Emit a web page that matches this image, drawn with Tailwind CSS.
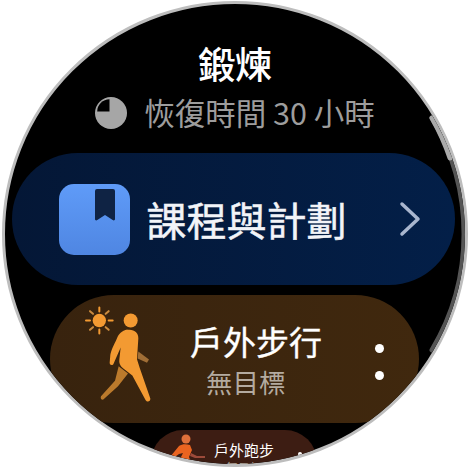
<!DOCTYPE html>
<html lang="zh-Hant">
<head>
    <meta charset="UTF-8">
    <title>鍛煉</title>
    <script src="https://cdn.jsdelivr.net/npm/@tailwindcss/browser@4"></script>
</head>
<body class="bg-white w-[470px] h-[470px] overflow-hidden font-['Noto_Sans_CJK_TC','Noto_Sans',sans-serif]">
    <div class="relative ml-[2px] mt-px w-[466px] h-[466px] rounded-full bg-black border-[3px] border-[#bdbdbd] overflow-hidden">
        <div class="flex flex-col items-center">
            <h1 class="mt-[34px] h-[50px] leading-[50px] text-[37px] font-medium text-white">鍛煉</h1>
            <div class="mt-px flex items-center gap-[17px] h-[46px] text-[#9d9d9d] text-[30.5px] leading-[46px]">
                <svg class="w-[32px] h-[32px] mt-[2px]" viewBox="0 0 32 32"><path fill="#a6a6a6" d="M16 0a16 16 0 1 1-16 16 16 16 0 0 1 16-16z"/><path fill="#000" d="M14.500 2.200v12.300h-12.300a12.500 12.500 0 0 1 12.300-12.300z"/></svg>
                <span>恢復時間 30 小時</span>
            </div>

            <a class="mt-[18px] -ml-[4px] w-[443px] h-[132px] shrink-0 rounded-[66px] bg-gradient-to-r from-[#041736] to-[#031f48] flex items-center pl-[47px] pr-[34px]">
                <span class="relative w-[71px] h-[71px] shrink-0 rounded-[15px] bg-gradient-to-b from-[#5f9bf8] to-[#4f86e2]">
                    <svg class="absolute left-[35px] top-[5px] w-[22px] h-[33px]" viewBox="0 0 22 33"><path fill="#0f2344" d="M3 0h16a2 2 0 0 1 2 2v28c0 1.500-1.300 1.800-2.300 1.100l-7.700-5.100-7.700 5.100c-1 .7-2.300.4-2.300-1.100v-28a2 2 0 0 1 2-2z"/></svg>
                </span>
                <span class="ml-[17px] text-[40px] leading-none text-[#f2f4f8] [-webkit-text-stroke:0.5px_#f2f4f8] whitespace-nowrap">課程與計劃</span>
                <svg class="ml-auto w-[22px] h-[36px]" viewBox="0 0 22 36" fill="none"><path d="M3 3l16 15-16 15" stroke="#a9b6ce" stroke-width="3.500" stroke-linecap="round" stroke-linejoin="round"/></svg>
            </a>

            <a class="mt-[10px] -ml-px w-[369px] h-[128px] shrink-0 rounded-[64px] bg-gradient-to-r from-[#38230e] to-[#40280e] flex items-center pl-[30px] pr-[35px]">
                <svg class="w-[80px] h-[107px] shrink-0 -mt-[8px]" viewBox="120 20 240 320">
                    <g stroke-width="6" stroke-linecap="round" fill="none">
                        <path d="M178 36v12M178 102v12M138 75h12M206 75h12" stroke="#f39a32"/>
                        <path d="M150 47l9 8M206 47l-9 8M150 103l9-8M206 103l-9-8" stroke="#c98a3e"/>
                    </g>
                    <circle cx="178" cy="75" r="20" fill="#f39a32"/>
                    <circle cx="272" cy="75" r="21" fill="#f39a32"/>
                    <path d="M295 168l32 24-6 10-28-13z" fill="#a06e36"/>
                    <path d="M236 212l28 22-30 38-44 40c-5 2-10-4-7-10l42-46z" fill="#bb7a2c"/>
                    <path d="M262 103c20-3 34 8 33 26l-4 62 8 26 32 92c1 10-10 12-14 5l-40-74-28-22c-10-8-12-16-11-26l4-36-22 50c-4 5-11 3-11-4l2-24c2-14 10-28 20-50 5-12 14-23 31-26z" fill="#f39a32"/>
                </svg>
                <span class="ml-[30px] flex flex-col items-start w-[134px] -mt-px">
                    <span class="text-[33px] leading-[46px] text-white [-webkit-text-stroke:0.4px_#ffffff] whitespace-nowrap">戶外步行</span>
                    <span class="ml-[16px] text-[26.5px] leading-[36px] text-[#b4aba0] whitespace-nowrap">無目標</span>
                </span>
                <span class="ml-auto flex flex-col gap-[18px] mt-[6px]">
                    <span class="block w-[9px] h-[9px] rounded-full bg-white"></span>
                    <span class="block w-[9px] h-[9px] rounded-full bg-white"></span>
                </span>
            </a>

            <a class="mt-[7px] -ml-[2px] w-[166px] h-[64px] shrink-0 rounded-[32px] bg-[#3d1d13] flex items-start pl-[14px] pr-[15px] pt-[3px]">
                <svg class="w-[40px] h-[34px] shrink-0" viewBox="0 0 40 34">
                    <circle cx="21" cy="6" r="4.500" fill="#e0703a"/>
                    <path d="M5 24l9-11c3-2 7-2 11-1l2 5-3 7 4 10h-10l-3-8 3-6-4 1-7 5z" fill="#ea6420"/>
                    <path d="M26 20l6 3 8 0v2l-10 0-5-2z" fill="#9c4a3a"/>
                </svg>
                <span class="ml-[9px] mt-[7px] flex flex-col items-center">
                    <span class="text-[15px] leading-[20px] text-white whitespace-nowrap">戶外跑步</span>
                    <span class="text-[12px] leading-[16px] text-[#b4aba0] whitespace-nowrap">無目標</span>
                </span>
                <span class="ml-auto mt-[19px] block w-[4px] h-[4px] rounded-full bg-white"></span>
            </a>
        </div>

        <!-- scrollbar follows the bezel -->
        <svg class="absolute -left-[5px] -top-[4px] w-[470px] h-[470px] pointer-events-none" viewBox="0 0 470 470" fill="none" stroke-linecap="round">
            <path d="M432 118A226 226 0 0 1 432 350" stroke="#555555" stroke-width="5"/>
            <path d="M432 118A226 226 0 0 1 450 158" stroke="#aaaaaa" stroke-width="5"/>
        </svg>
    </div>
</body>
</html>
